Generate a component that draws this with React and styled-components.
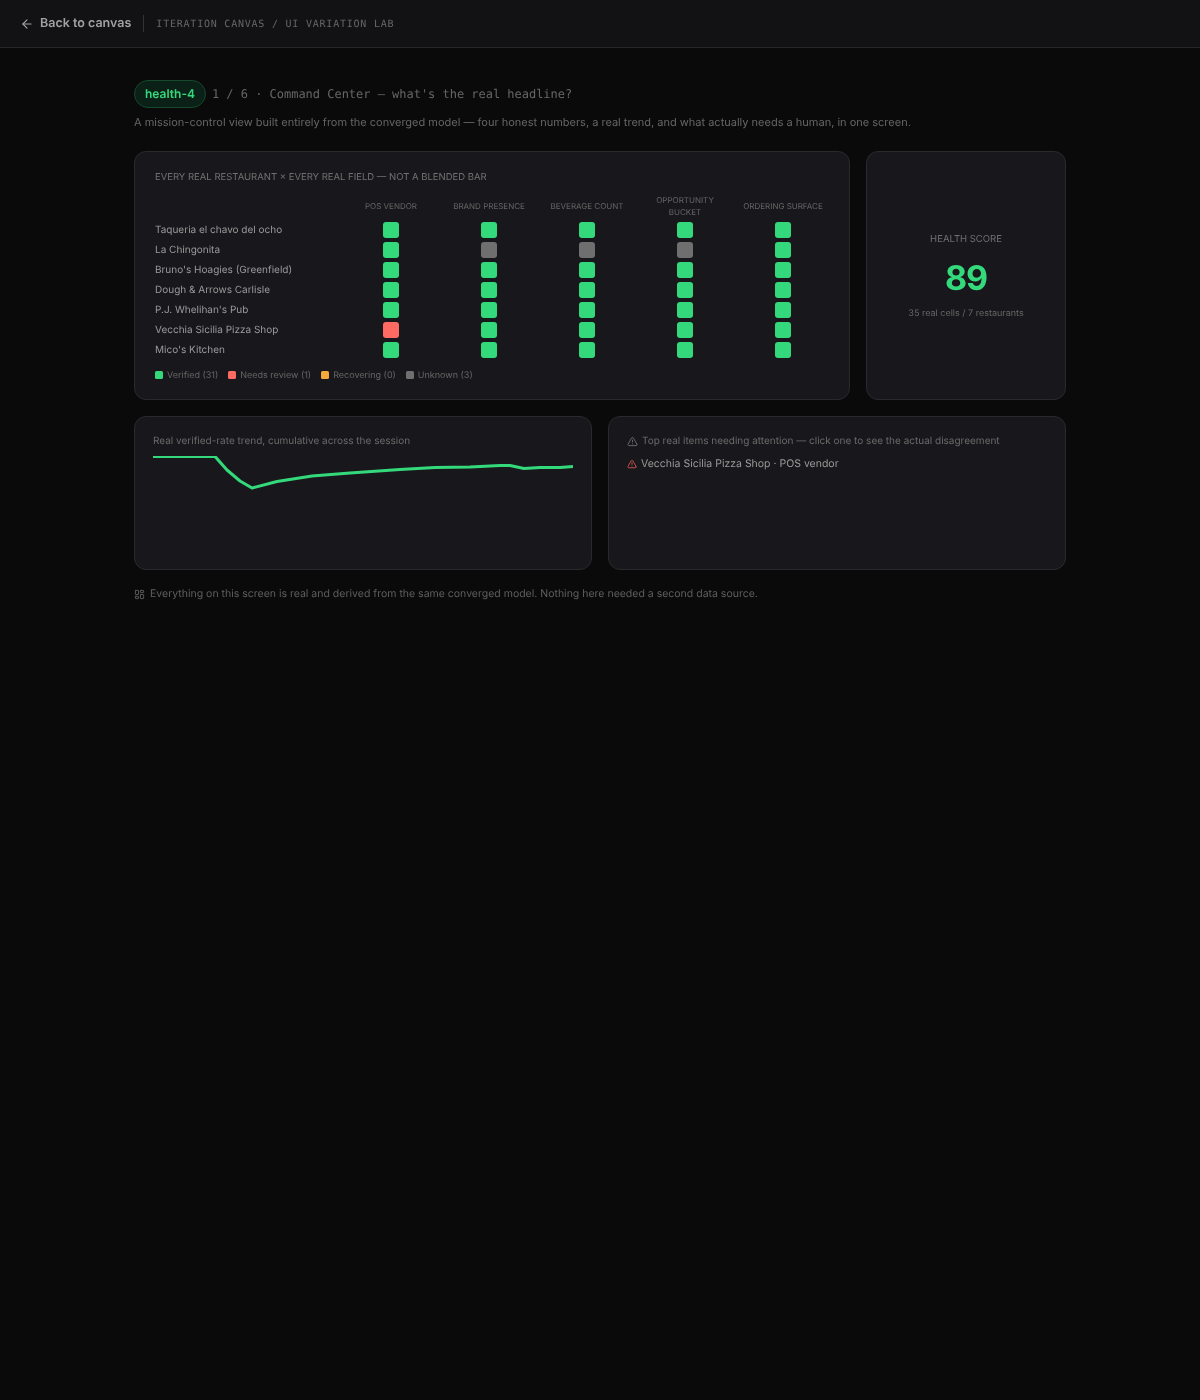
import styled, { createGlobalStyle } from 'styled-components';
import { ArrowLeft, TriangleAlert, LayoutDashboard } from 'lucide-react';

const restaurants = [
  { name: 'Taqueria el chavo del ocho', cells: ['ok', 'ok', 'ok', 'ok', 'ok'] },
  { name: 'La Chingonita', cells: ['ok', 'unknown', 'unknown', 'unknown', 'ok'] },
  { name: "Bruno's Hoagies (Greenfield)", cells: ['ok', 'ok', 'ok', 'ok', 'ok'] },
  { name: 'Dough & Arrows Carlisle', cells: ['ok', 'ok', 'ok', 'ok', 'ok'] },
  { name: "P.J. Whelihan's Pub", cells: ['ok', 'ok', 'ok', 'ok', 'ok'] },
  { name: 'Vecchia Sicilia Pizza Shop', cells: ['review', 'ok', 'ok', 'ok', 'ok'] },
  { name: "Mico's Kitchen", cells: ['ok', 'ok', 'ok', 'ok', 'ok'] },
];

const fields = ['POS vendor', 'Brand presence', 'Beverage count', 'Opportunity bucket', 'Ordering surface'];

const legend = [
  { kind: 'ok', label: 'Verified (31)' },
  { kind: 'review', label: 'Needs review (1)' },
  { kind: 'recovering', label: 'Recovering (0)' },
  { kind: 'unknown', label: 'Unknown (3)' },
];

const statusColors = {
  ok: '#34d97b',
  review: '#ff6b63',
  recovering: '#f5a93b',
  unknown: '#6f6f6f',
};

const trend = '0,0.4 62,0.4 74,14 87,25 99,32 124,25.5 159,20 197,17 247,13.5 282,11.5 317,11 347,9.5 357,9.5 371,12.5 387,11.5 407,11.5 420,10.5';

const GlobalStyle = createGlobalStyle`
  html, body {
    margin: 0;
    padding: 0;
    background: #0a0a0b;
    min-height: 1400px;
    font-family: 'Inter', sans-serif;
    text-rendering: geometricPrecision;
  }
  #root { will-change: transform; }
  * { box-sizing: border-box; }
`;

const TopBar = styled.header`
  height: 48px;
  display: flex;
  align-items: center;
  padding: 0 20px;
  background: #121214;
  border-bottom: 1px solid #27272a;
`;

const BackLink = styled.a`
  display: flex;
  align-items: center;
  gap: 6px;
  color: #a1a1a1;
  font-size: 12.5px;
  line-height: 15px;
  font-weight: 600;
  padding-right: 12px;
  border-right: 1px solid #333336;
  height: 17px;
`;

const Crumb = styled.span`
  margin: 2px 0 0 12px;
  font-family: 'DejaVu Sans Mono', monospace;
  font-size: 10px;
  letter-spacing: 0.78px;
  color: #666;
`;

const Page = styled.main`
  width: 932px;
  margin: 0 auto;
  padding-top: 32px;
`;

const TitleRow = styled.div`
  display: flex;
  align-items: center;
  gap: 6px;
  height: 28px;
`;

const Pill = styled.span`
  display: flex;
  align-items: center;
  height: 28px;
  padding: 0 10px 1px;
  border-radius: 14px;
  background: #0b2117;
  border: 1px solid #14492d;
  color: #34d97b;
  font-size: 12px;
  font-weight: 600;
`;

const Headline = styled.span`
  font-family: 'DejaVu Sans Mono', monospace;
  font-size: 12px;
  letter-spacing: -0.02px;
  color: #666;
`;

const Lead = styled.p`
  margin: 6px 0 20px;
  font-size: 11px;
  line-height: 17px;
  color: #666;
`;

const TopGrid = styled.section`
  display: grid;
  grid-template-columns: 716px 200px;
  gap: 16px;
`;

const BottomGrid = styled.section`
  display: grid;
  grid-template-columns: 1fr 1fr;
  gap: 16px;
  margin-top: 16px;
`;

const Card = styled.div`
  background: #18181c;
  border: 1px solid #2a2a2e;
  border-radius: 12px;
`;

const MatrixCard = styled(Card)`
  height: 249px;
  padding: 19px 20px;
`;

const MatrixTitle = styled.div`
  font-size: 9.5px;
  line-height: 13px;
  color: #707070;
  text-transform: uppercase;
`;

const Matrix = styled.div`
  display: grid;
  grid-template-columns: 184px repeat(5, 92px);
  column-gap: 6px;
  row-gap: 4px;
  align-items: center;
  margin-top: 10px;
`;

const FieldHead = styled.div`
  font-size: 8px;
  line-height: 12px;
  color: #666;
  text-align: center;
  text-transform: uppercase;
`;

const RowName = styled.div`
  font-size: 10px;
  line-height: 16px;
  color: #9a9a9a;
  margin-top: -1px;
`;

const Cell = styled.span`
  justify-self: center;
  width: 16px;
  height: 16px;
  border-radius: 3px;
  background: ${(p) => statusColors[p.$kind]};
`;

const Legend = styled.div`
  display: flex;
  gap: 10px;
  margin-top: 11px;
`;

const LegendItem = styled.span`
  display: flex;
  align-items: center;
  gap: 4px;
  font-size: 9px;
  line-height: 13px;
  color: #666;
`;

const Swatch = styled.span`
  width: 8px;
  height: 8px;
  margin-top: -1px;
  border-radius: 1.5px;
  background: ${(p) => statusColors[p.$kind]};
`;

const ScoreCard = styled(Card)`
  display: flex;
  flex-direction: column;
  align-items: center;
  justify-content: center;
`;

const ScoreLabel = styled.div`
  font-size: 9.5px;
  line-height: 13px;
  color: #707070;
  text-transform: uppercase;
  margin-top: 1px;
`;

const ScoreValue = styled.div`
  margin-top: 13px;
  font-size: 34px;
  font-weight: 700;
  line-height: 40px;
  letter-spacing: -1px;
  color: #34d97b;
`;

const ScoreNote = styled.div`
  margin-top: 9px;
  font-size: 9px;
  line-height: 12px;
  color: #666;
`;

const PanelCard = styled(Card)`
  height: 154px;
  padding: 17px 18px;
`;

const PanelTitle = styled.div`
  display: flex;
  align-items: center;
  gap: 4px;
  font-size: 10px;
  line-height: 14px;
  color: #6a6a6a;
`;

const TrendChart = styled.svg`
  display: block;
  margin-top: 8px;
  width: 420px;
  height: 96px;
`;

const AttentionRow = styled.div`
  display: flex;
  align-items: center;
  gap: 4px;
  margin-top: 9px;
  font-size: 10.5px;
  line-height: 14px;
  color: #9a9a9a;
`;

const FooterNote = styled.p`
  display: flex;
  align-items: center;
  gap: 5px;
  margin: 17px 0 0;
  font-size: 10.5px;
  line-height: 14px;
  color: #5f5f5f;
`;

export default function App() {
  return (
    <>
      <GlobalStyle />
      <TopBar>
        <BackLink>
          <ArrowLeft size={14} />
          Back to canvas
        </BackLink>
        <Crumb>ITERATION CANVAS / UI VARIATION LAB</Crumb>
      </TopBar>
      <Page>
        <TitleRow>
          <Pill>health-4</Pill>
          <Headline>1 / 6 · Command Center — what's the real headline?</Headline>
        </TitleRow>
        <Lead>A mission-control view built entirely from the converged model — four honest numbers, a real trend, and what actually needs a human, in one screen.</Lead>
        <TopGrid>
          <MatrixCard>
            <MatrixTitle>Every real restaurant × every real field — not a blended bar</MatrixTitle>
            <Matrix>
              <span />
              {fields.map((f) => <FieldHead key={f}>{f}</FieldHead>)}
              {restaurants.map((r) => (
                <Row key={r.name} {...r} />
              ))}
            </Matrix>
            <Legend>
              {legend.map((l) => (
                <LegendItem key={l.kind}>
                  <Swatch $kind={l.kind} />
                  {l.label}
                </LegendItem>
              ))}
            </Legend>
          </MatrixCard>
          <ScoreCard>
            <ScoreLabel>Health score</ScoreLabel>
            <ScoreValue>89</ScoreValue>
            <ScoreNote>35 real cells / 7 restaurants</ScoreNote>
          </ScoreCard>
        </TopGrid>
        <BottomGrid>
          <PanelCard>
            <PanelTitle>Real verified-rate trend, cumulative across the session</PanelTitle>
            <TrendChart viewBox="0 0 420 96">
              <polyline points={trend} fill="none" stroke="#34d97b" strokeWidth="3" strokeLinejoin="round" />
            </TrendChart>
          </PanelCard>
          <PanelCard>
            <PanelTitle>
              <TriangleAlert size={11} color="#6e6e6e" />
              Top real items needing attention — click one to see the actual disagreement
            </PanelTitle>
            <AttentionRow>
              <TriangleAlert size={10} color="#e05c55" />
              Vecchia Sicilia Pizza Shop · POS vendor
            </AttentionRow>
          </PanelCard>
        </BottomGrid>
        <FooterNote>
          <LayoutDashboard size={11} />
          Everything on this screen is real and derived from the same converged model. Nothing here needed a second data source.
        </FooterNote>
      </Page>
    </>
  );
}

function Row({ name, cells }) {
  return (
    <>
      <RowName>{name}</RowName>
      {cells.map((c, i) => <Cell key={i} $kind={c} />)}
    </>
  );
}
